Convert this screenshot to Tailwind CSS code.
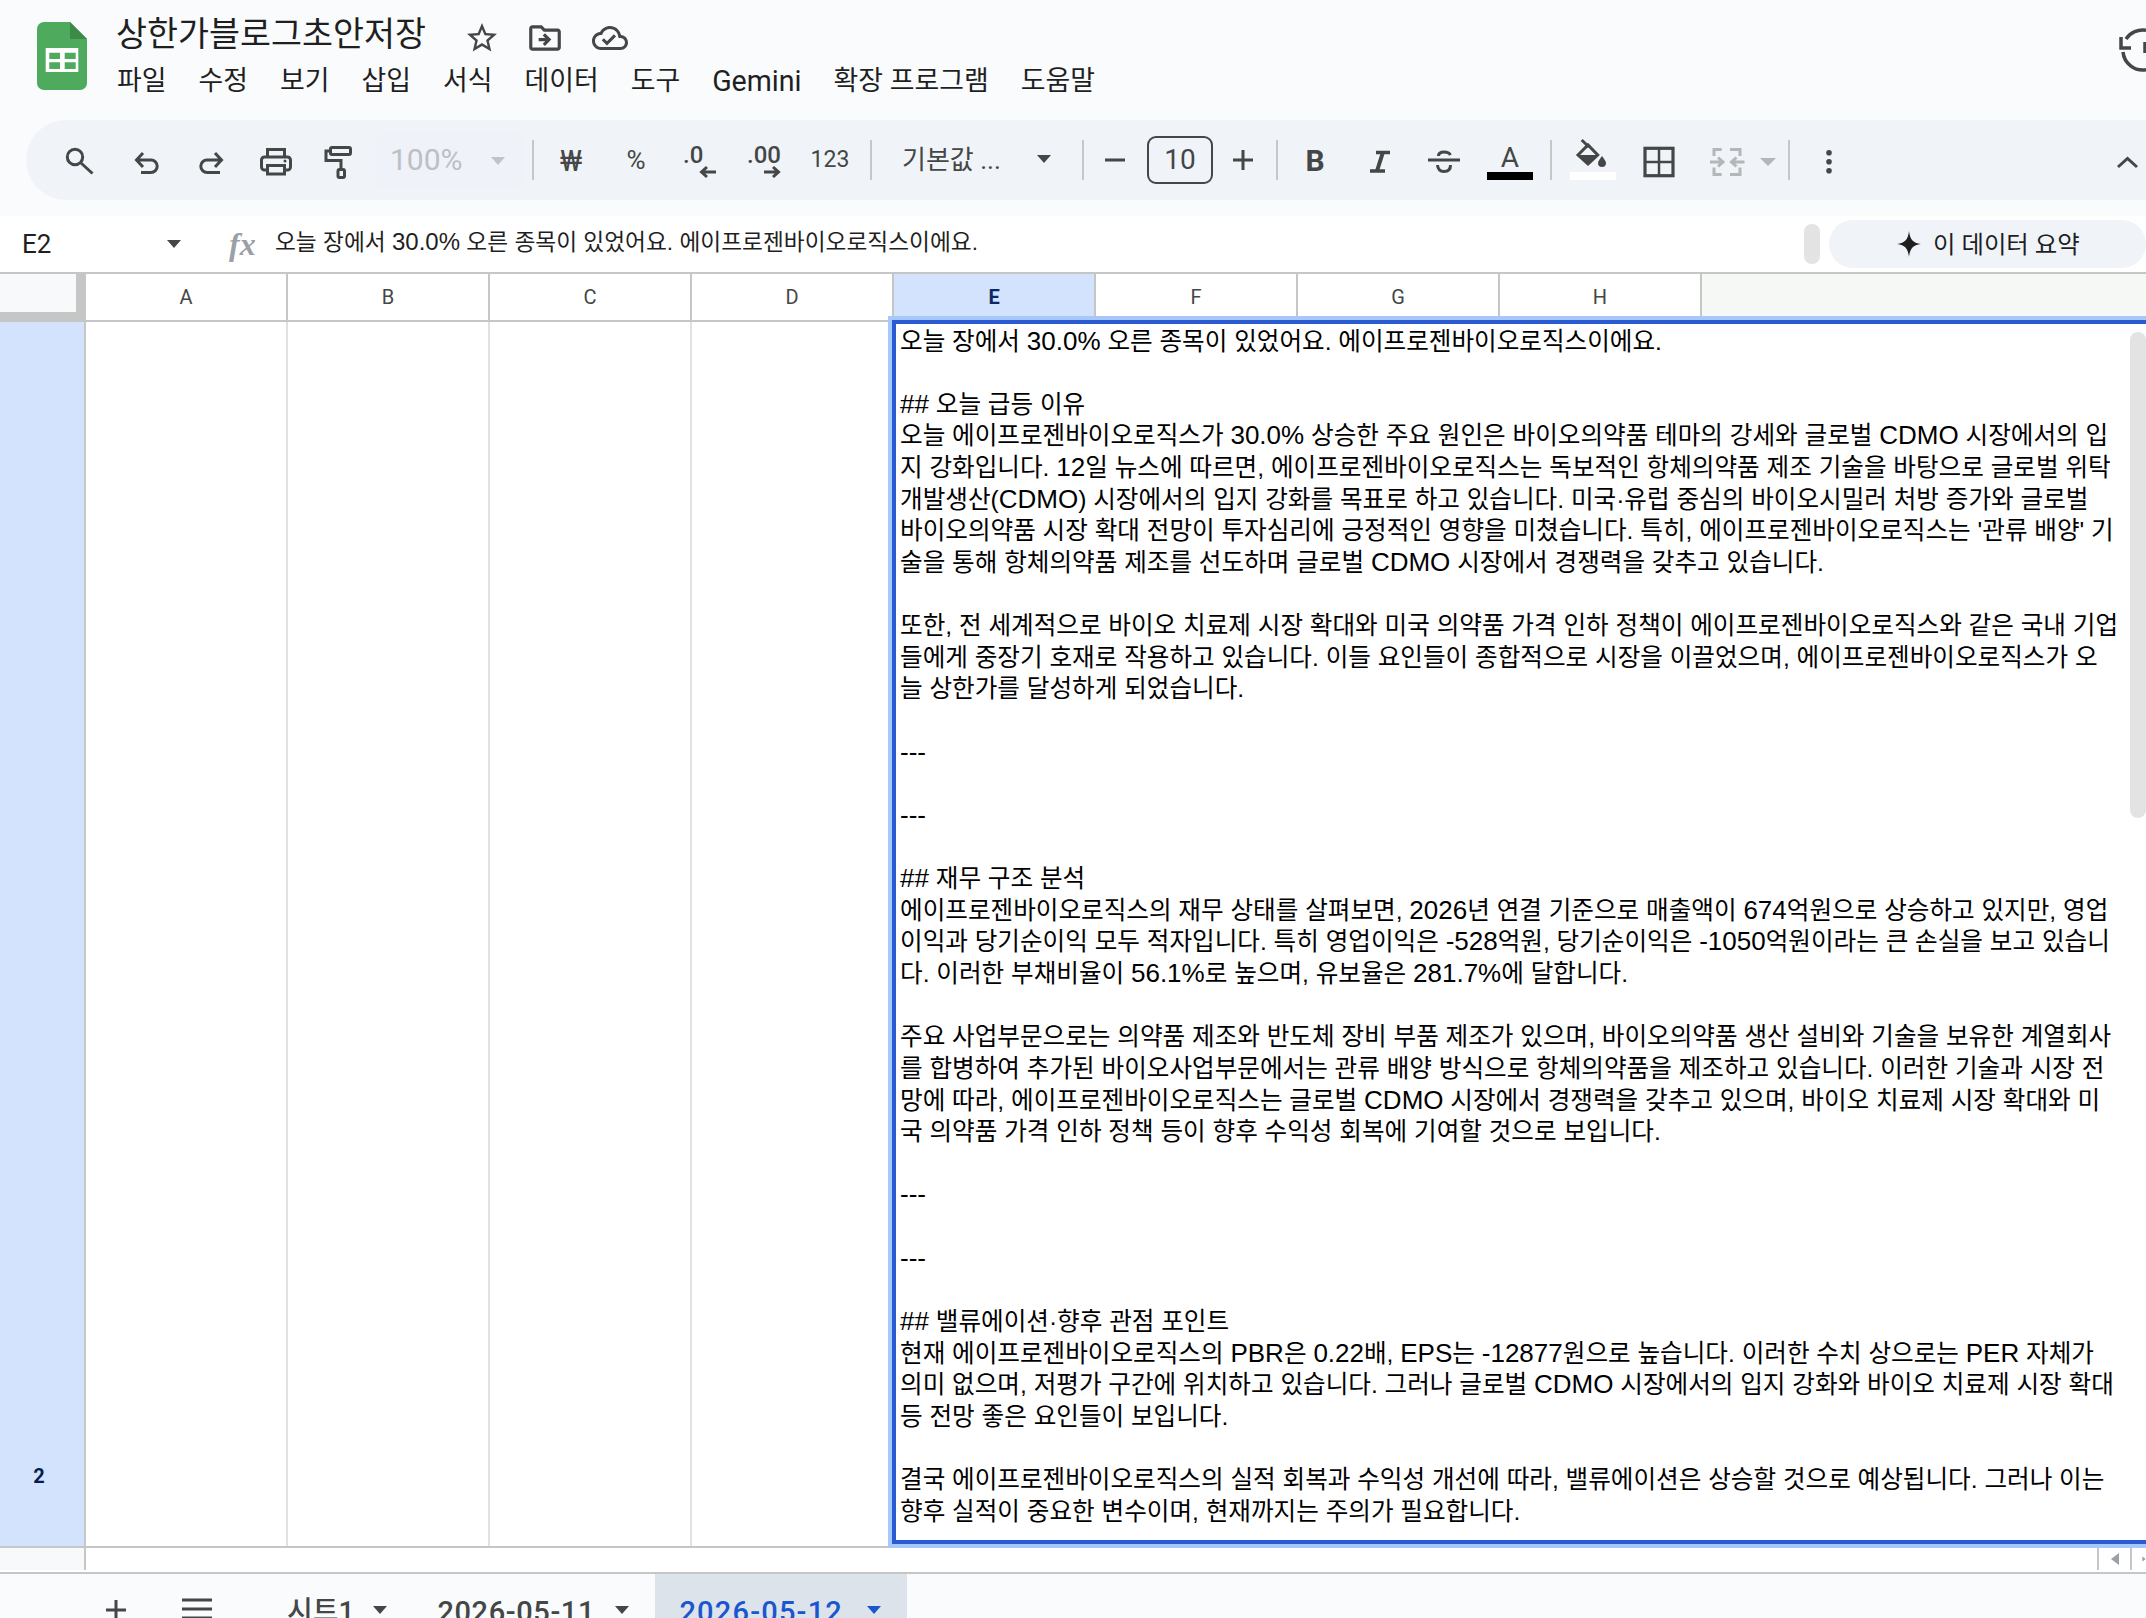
<!DOCTYPE html>
<html lang="ko">
<head>
  <meta charset="UTF-8" />
  <title>상한가블로그초안저장</title>
  <script src="https://cdn.jsdelivr.net/npm/@tailwindcss/browser@4"></script>
</head>
<body class="bg-white">
<div class="w-[2146px] h-[1618px] overflow-hidden flex flex-col [font-family:Roboto,'Noto_Sans_CJK_KR',sans-serif] text-[#1f1f1f]">

  <!-- Title + menu -->
  <header class="h-[216px] shrink-0 bg-[#f9fbfd] flex flex-col">
    <div class="h-[120px] flex">
      <svg class="ml-[37px] mt-[22px] shrink-0" width="50" height="68" viewBox="0 0 50 68">
        <path fill="#4eab5e" d="M7 0H33L50 17V61a7 7 0 0 1-7 7H7a7 7 0 0 1-7-7V7a7 7 0 0 1 7-7Z"/>
        <path fill="#3b8a45" d="M33 0L50 17H33Z"/>
        <rect x="8.7" y="26" width="32.6" height="24" fill="#fff"/>
        <path fill="#4eab5e" d="M12.3 30.7H23V37H12.3ZM27.7 30.7H38.7V37H27.7ZM12.3 40.3H23V47H12.3ZM27.7 40.3H38.7V47H27.7Z"/>
      </svg>
      <div class="ml-[29px] flex flex-col">
        <div class="h-[46px] mt-[12px] flex items-center">
          <span class="text-[33.7px] leading-[46px]">상한가블로그초안저장</span>
          <svg class="ml-[38px] mt-[6px]" width="36" height="36" viewBox="0 0 24 24" fill="#444746"><path d="M22 9.24l-7.19-.62L12 2 9.19 8.63 2 9.24l5.46 4.73L5.82 21 12 17.27 18.18 21l-1.63-7.03L22 9.24zM12 15.4l-3.76 2.27 1-4.28-3.32-2.88 4.38-.38L12 6.1l1.71 4.04 4.38.38-3.32 2.88 1 4.28L12 15.4z"/></svg>
          <svg class="ml-[26px] mt-[6px]" width="38" height="38" viewBox="0 0 24 24" fill="#444746"><path d="M20 6h-8l-2-2H4c-1.1 0-1.99.9-1.99 2L2 18c0 1.1.9 2 2 2h16c1.1 0 2-.9 2-2V8c0-1.1-.9-2-2-2zm0 12H4V6h5.17l2 2H20v10zM12.16 12H8v2h4.16l-1.59 1.59L11.98 17 16 13l-4.02-4-1.41 1.41z"/></svg>
          <svg class="ml-[28px] mt-[6px]" width="36" height="36" viewBox="0 0 24 24" fill="#444746"><path d="M19.35 10.04C18.67 6.59 15.64 4 12 4 9.11 4 6.6 5.64 5.35 8.04 2.34 8.36 0 10.91 0 14c0 3.31 2.69 6 6 6h13c2.76 0 5-2.24 5-5 0-2.64-2.05-4.78-4.65-4.96zM19 18H6c-2.21 0-4-1.79-4-4 0-2.05 1.53-3.76 3.56-3.97l1.07-.11.5-.95C8.08 7.14 9.94 6 12 6c2.62 0 4.88 1.86 5.39 4.43l.3 1.5 1.53.11c1.56.1 2.78 1.41 2.78 2.96 0 1.65-1.35 3-3 3zm-9-3.82l-2.09-2.09L6.5 13.5 10 17l6.01-6.01-1.41-1.41z"/></svg>
        </div>
        <nav class="flex gap-[32px] ml-[1px] mt-[5px] text-[26.9px] leading-[36px]">
          <span>파일</span><span>수정</span><span>보기</span><span>삽입</span><span>서식</span><span>데이터</span><span>도구</span><span class="text-[28.6px]">Gemini</span><span>확장 프로그램</span><span>도움말</span>
        </nav>
      </div>
      <svg class="ml-auto mt-[28px] shrink-0" width="30" height="44" viewBox="0 0 30 44" fill="none" stroke="#444746" stroke-width="3.5">
        <path d="M10 11A20 20 0 0 1 30 2.2"/>
        <path d="M7 24A20 20 0 0 0 30 41.8"/>
        <path d="M5 9V20H15"/>
        <path d="M29 14V25"/>
      </svg>
    </div>

    <!-- Toolbar -->
    <div class="h-[80px] ml-[26px] bg-[#f0f4f9] rounded-l-[40px] flex items-center text-[#444746]">
      <svg class="ml-[31px] shrink-0" width="44" height="44" viewBox="0 0 44 44" fill="none" stroke="#444746" stroke-width="3"><circle cx="18" cy="19" r="7.7"/><path d="M24 25L35.5 35.5"/></svg>
      <svg class="ml-[24px] shrink-0" width="44" height="44" viewBox="0 0 44 44" fill="none" stroke="#444746" stroke-width="3"><path d="M18 15L11.5 22L18 29M12 22H26A6.2 6.2 0 0 1 26 34.4H16"/></svg>
      <svg class="ml-[20px] shrink-0" width="44" height="44" viewBox="0 0 44 44" fill="none" stroke="#444746" stroke-width="3"><path d="M26 15L32.5 22L26 29M32 22H18A6.2 6.2 0 0 0 18 34.4H31"/></svg>
      <svg class="ml-[21px] shrink-0" width="44" height="44" viewBox="0 0 44 44" fill="none" stroke="#444746" stroke-width="3"><path d="M13.5 18V11.5H30.5V18"/><rect x="7.5" y="19" width="29" height="13" rx="3"/><rect x="13.5" y="27.5" width="17" height="8.5" fill="#f0f4f9"/><circle cx="31" cy="23" r="1.5" fill="#444746" stroke="none"/></svg>
      <svg class="ml-[17px] shrink-0" width="44" height="44" viewBox="0 0 44 44" fill="none" stroke="#444746" stroke-width="3"><rect x="15.5" y="9.5" width="20" height="7" rx="1.5"/><path d="M15 13H11V22.5H26V31"/><rect x="23" y="31.5" width="6.5" height="8" rx="1.5"/></svg>

      <div class="ml-[16px] w-[148px] h-[56px] shrink-0 rounded-lg bg-[#eff3f9] flex items-center">
        <span class="ml-[15px] w-[72px] text-[30px] leading-none text-[#bcbfc3]">100%</span>
        <svg class="ml-[24px]" width="24" height="44" viewBox="0 0 24 44" fill="#c0c3c7"><path d="M5 19H19L12 27Z"/></svg>
      </div>
      <div class="ml-[9px] w-[2px] h-[40px] shrink-0 bg-[#c7c7c7]"></div>

      <div class="ml-[15px] w-[44px] h-[44px] shrink-0 flex items-center justify-center text-[30px]">₩</div>
      <div class="ml-[21px] w-[44px] h-[44px] shrink-0 flex items-center justify-center text-[26px]">%</div>
      <svg class="ml-[18px] shrink-0" width="44" height="44" viewBox="0 0 44 44" fill="#444746"><text x="7" y="25" font-size="24" font-weight="500">.0</text><path d="M40 34H26M31 29L25.5 34L31 39" fill="none" stroke="#444746" stroke-width="3"/></svg>
      <svg class="ml-[21px] shrink-0" width="44" height="44" viewBox="0 0 44 44" fill="#444746"><text x="6" y="25" font-size="24" font-weight="500">.00</text><path d="M23 34H37M32 29L37.5 34L32 39" fill="none" stroke="#444746" stroke-width="3"/></svg>
      <div class="ml-[23px] w-[44px] h-[44px] shrink-0 flex items-center justify-center text-[23px]">123</div>
      <div class="ml-[18px] w-[2px] h-[40px] shrink-0 bg-[#c7c7c7]"></div>

      <div class="ml-[30px] w-[154px] shrink-0 flex items-center justify-between text-[26px]">
        <span>기본값 ...</span>
        <svg width="24" height="44" viewBox="0 0 24 44" fill="#444746"><path d="M5 17H19L12 25Z"/></svg>
      </div>
      <div class="ml-[26px] w-[2px] h-[40px] shrink-0 bg-[#c7c7c7]"></div>

      <svg class="ml-[9px] shrink-0" width="44" height="44" viewBox="0 0 44 44" fill="none" stroke="#444746" stroke-width="3"><path d="M12 22H32"/></svg>
      <div class="ml-[10px] w-[66px] h-[48px] shrink-0 border-2 border-[#444746] rounded-[9px] flex items-center justify-center text-[28px]">10</div>
      <svg class="ml-[8px] shrink-0" width="44" height="44" viewBox="0 0 44 44" fill="none" stroke="#444746" stroke-width="3"><path d="M12 22H32M22 12V32"/></svg>
      <div class="ml-[11px] w-[2px] h-[40px] shrink-0 bg-[#c7c7c7]"></div>

      <div class="ml-[15px] w-[44px] h-[44px] shrink-0 flex items-center justify-center text-[30px] font-bold">B</div>
      <svg class="ml-[21px] shrink-0" width="44" height="44" viewBox="0 0 44 44" fill="none" stroke="#444746"><path d="M18 14.5H32M12 33H27" stroke-width="3.5"/><path d="M25 14L19 33" stroke-width="4"/></svg>
      <svg class="ml-[20px] shrink-0" width="44" height="44" viewBox="0 0 44 44" fill="none" stroke="#444746" stroke-width="3"><path d="M6 22H38"/><path d="M16.5 18Q16.5 14 22 14Q27 14 28.5 17"/><path d="M15.5 27Q16 33.5 22 33.5Q28.5 33.5 28.5 27"/></svg>
      <svg class="ml-[21px] shrink-0" width="46" height="44" viewBox="0 0 46 44" fill="#444746"><text x="23" y="29" font-size="28" text-anchor="middle">A</text><rect y="34" width="46" height="8" fill="#000"/></svg>
      <div class="ml-[17px] w-[2px] h-[40px] shrink-0 bg-[#c7c7c7]"></div>

      <svg class="ml-[18px] shrink-0" width="46" height="44" viewBox="0 0 46 44"><path d="M11.7 2L19 9M8 17L18 7L27.7 17L18 26Z" fill="none" stroke="#444746" stroke-width="3"/><path d="M8 17H27.7L18 26Z" fill="#444746"/><path d="M32 18C34 21 36 23 36 25A4 4 0 0 1 28 25C28 23 30 21 32 18Z" fill="#444746"/><rect y="34" width="46" height="8" fill="#fff"/></svg>
      <svg class="ml-[21px] shrink-0" width="44" height="44" viewBox="0 0 44 44" fill="none" stroke="#444746"><rect x="8" y="10.3" width="28" height="27.4" stroke-width="3.2"/><path d="M22 10V38M8 24H36" stroke-width="2.5"/></svg>
      <svg class="ml-[24px] shrink-0" width="44" height="44" viewBox="0 0 44 44" fill="none" stroke="#b4b6b8" stroke-width="3"><path d="M16.7 11.5H9V18M9 29.5V36.5H16.7M25 11.5H35V18M35 29.5V36.5H25"/><path d="M5 24H17M13 19.5L18 24L13 28.5M39.5 24H27.5M31.5 19.5L26.5 24L31.5 28.5"/></svg>
      <svg class="ml-[7px] shrink-0" width="24" height="44" viewBox="0 0 24 44" fill="#b4b6b8"><path d="M4 20H20L12 28Z"/></svg>
      <div class="ml-[8px] w-[2px] h-[40px] shrink-0 bg-[#c7c7c7]"></div>
      <svg class="ml-[17px] shrink-0" width="44" height="44" viewBox="0 0 44 44" fill="#444746"><circle cx="22" cy="14.7" r="2.8"/><circle cx="22" cy="23.7" r="2.8"/><circle cx="22" cy="32.7" r="2.8"/></svg>
      <svg class="ml-auto shrink-0" width="36" height="44" viewBox="0 0 36 44" fill="none" stroke="#444746" stroke-width="3"><path d="M8 29L17.5 20.5L27 29"/></svg>
    </div>
  </header>

  <!-- Formula bar -->
  <div class="h-[56px] shrink-0 flex items-center bg-white">
    <span class="ml-[22px] w-[29px] text-[26px] leading-none">E2</span>
    <svg class="ml-[111px]" width="24" height="24" viewBox="0 0 24 24" fill="#444746"><path d="M5 8H19L12 16Z"/></svg>
    <span class="ml-[43px] w-[34px] [font-family:'Liberation_Serif',serif] italic font-bold text-[32px] leading-none text-[#9aa0a6]">fx</span>
    <span class="ml-[12px] flex-1 -mt-[3px] whitespace-nowrap text-[22.7px] [font-family:'Liberation_Sans','Noto_Sans_CJK_KR',sans-serif]">오늘 장에서 <span class="text-[24px] leading-none">30.0%</span> 오른 종목이 있었어요. 에이프로젠바이오로직스이에요.</span>
    <div class="w-[16px] h-[40px] rounded-lg bg-[#e3e3e3]"></div>
    <div class="ml-[9px] w-[317px] h-[48px] rounded-[24px] bg-[#f0f4f9] flex items-center pl-[67px]">
      <svg width="26" height="26" viewBox="0 0 24 24" fill="#1f1f1f"><path d="M12 0C12.8 7.5 15.5 11 23 12C15.5 13 12.8 16.5 12 24C11.2 16.5 8.5 13 1 12C8.5 11 11.2 7.5 12 0Z"/></svg>
      <span class="ml-[11px] mt-[2px] text-[24.4px] leading-none">이 데이터 요약</span>
    </div>
  </div>

  <!-- Column headers -->
  <div class="h-[50px] shrink-0 border-t-2 border-b-2 border-[#c4c7c5] flex text-[20px] text-[#444746]">
    <div class="w-[86px] bg-[#c4c7c5]"><div class="w-[76px] h-[38px] bg-[#f8f9fa]"></div></div>
    <div class="w-[202px] border-r-2 border-[#c4c7c5] flex items-center justify-center">A</div>
    <div class="w-[202px] border-r-2 border-[#c4c7c5] flex items-center justify-center">B</div>
    <div class="w-[202px] border-r-2 border-[#c4c7c5] flex items-center justify-center">C</div>
    <div class="w-[202px] border-r-2 border-[#c4c7c5] flex items-center justify-center">D</div>
    <div class="w-[202px] border-r-2 border-[#c4c7c5] bg-[#d3e3fd] flex items-center justify-center font-bold text-[#0a2a66]">E</div>
    <div class="w-[202px] border-r-2 border-[#c4c7c5] flex items-center justify-center">F</div>
    <div class="w-[202px] border-r-2 border-[#c4c7c5] flex items-center justify-center">G</div>
    <div class="w-[202px] border-r-2 border-[#c4c7c5] flex items-center justify-center">H</div>
    <div class="flex-1 bg-[#f6f8f6]"></div>
  </div>

  <!-- Row 2 -->
  <div class="h-[1226px] shrink-0 border-b-2 border-[#c4c7c5] flex">
    <div class="w-[86px] shrink-0 border-r-2 border-[#c4c7c5] bg-[#d3e3fd] flex items-end justify-center pr-[6px] pb-[58px] text-[20px] leading-[24px] font-bold text-[#041e49]">2</div>
    <div class="w-[202px] shrink-0 border-r-2 border-[#e1e1e1]"></div>
    <div class="w-[202px] shrink-0 border-r-2 border-[#e1e1e1]"></div>
    <div class="w-[202px] shrink-0 border-r-2 border-[#e1e1e1]"></div>
    <div class="w-[202px] shrink-0 border-r-2 border-[#e1e1e1]"></div>
    <div class="relative z-10 -ml-[2px] -mt-[2px] w-[1300px] h-[1224px] shrink-0 border-4 border-[#2b5bd0] ring-4 ring-[#a8c7fa] bg-white pl-[4px] pt-[1.5px] whitespace-pre text-[24.6px] leading-[31.63px] text-black [font-family:'Liberation_Sans','Noto_Sans_CJK_KR',sans-serif] [&>i]:not-italic [&>i]:text-[26px] [&>i]:leading-none">오늘 장에서 <i>30.0%</i> 오른 종목이 있었어요. 에이프로젠바이오로직스이에요.

<i>##</i> 오늘 급등 이유
오늘 에이프로젠바이오로직스가 <i>30.0%</i> 상승한 주요 원인은 바이오의약품 테마의 강세와 글로벌 <i>CDMO</i> 시장에서의 입
지 강화입니다. <i>12</i>일 뉴스에 따르면, 에이프로젠바이오로직스는 독보적인 항체의약품 제조 기술을 바탕으로 글로벌 위탁
개발생산(<i>CDMO</i>) 시장에서의 입지 강화를 목표로 하고 있습니다. 미국·유럽 중심의 바이오시밀러 처방 증가와 글로벌
바이오의약품 시장 확대 전망이 투자심리에 긍정적인 영향을 미쳤습니다. 특히, 에이프로젠바이오로직스는 '관류 배양' 기
술을 통해 항체의약품 제조를 선도하며 글로벌 <i>CDMO</i> 시장에서 경쟁력을 갖추고 있습니다.

또한, 전 세계적으로 바이오 치료제 시장 확대와 미국 의약품 가격 인하 정책이 에이프로젠바이오로직스와 같은 국내 기업
들에게 중장기 호재로 작용하고 있습니다. 이들 요인들이 종합적으로 시장을 이끌었으며, 에이프로젠바이오로직스가 오
늘 상한가를 달성하게 되었습니다.

<i>---</i>

<i>---</i>

<i>##</i> 재무 구조 분석
에이프로젠바이오로직스의 재무 상태를 살펴보면, <i>2026</i>년 연결 기준으로 매출액이 <i>674</i>억원으로 상승하고 있지만, 영업
이익과 당기순이익 모두 적자입니다. 특히 영업이익은 <i>-528</i>억원, 당기순이익은 <i>-1050</i>억원이라는 큰 손실을 보고 있습니
다. 이러한 부채비율이 <i>56.1%</i>로 높으며, 유보율은 <i>281.7%</i>에 달합니다.

주요 사업부문으로는 의약품 제조와 반도체 장비 부품 제조가 있으며, 바이오의약품 생산 설비와 기술을 보유한 계열회사
를 합병하여 추가된 바이오사업부문에서는 관류 배양 방식으로 항체의약품을 제조하고 있습니다. 이러한 기술과 시장 전
망에 따라, 에이프로젠바이오로직스는 글로벌 <i>CDMO</i> 시장에서 경쟁력을 갖추고 있으며, 바이오 치료제 시장 확대와 미
국 의약품 가격 인하 정책 등이 향후 수익성 회복에 기여할 것으로 보입니다.

<i>---</i>

<i>---</i>

<i>##</i> 밸류에이션·향후 관점 포인트
현재 에이프로젠바이오로직스의 <i>PBR</i>은 <i>0.22</i>배, <i>EPS</i>는 <i>-12877</i>원으로 높습니다. 이러한 수치 상으로는 <i>PER</i> 자체가
의미 없으며, 저평가 구간에 위치하고 있습니다. 그러나 글로벌 <i>CDMO</i> 시장에서의 입지 강화와 바이오 치료제 시장 확대
등 전망 좋은 요인들이 보입니다.

결국 에이프로젠바이오로직스의 실적 회복과 수익성 개선에 따라, 밸류에이션은 상승할 것으로 예상됩니다. 그러나 이는
향후 실적이 중요한 변수이며, 현재까지는 주의가 필요합니다.<div class="absolute top-[8px] left-[1234px] w-[16px] h-[486px] rounded-lg bg-[#e3e3e3]"></div></div>
  </div>

  <!-- Horizontal scrollbar -->
  <div class="h-[24px] shrink-0 flex items-start">
    <div class="w-[86px] h-[22px] shrink-0 bg-[#f8f9fa] border-r-2 border-[#c4c7c5]"></div>
    <div class="flex-1"></div>
    <div class="w-[33px] h-[22px] shrink-0 border-l-2 border-[#c4c7c5] flex items-center justify-center">
      <svg width="10" height="14" viewBox="0 0 10 14" fill="#9aa0a6"><path d="M9 1V13L1 7Z"/></svg>
    </div>
    <div class="w-[16px] h-[22px] shrink-0 border-l-2 border-[#c4c7c5] flex items-center pl-[10px]">
      <svg width="10" height="14" viewBox="0 0 10 14" fill="#9aa0a6"><path d="M1 1V13L9 7Z"/></svg>
    </div>
  </div>

  <!-- Sheet tabs -->
  <div class="flex-1 border-t-2 border-[#c4c7c5] bg-[#f9fbfd] flex text-[28px] font-medium text-[#444746]">
    <svg class="ml-[94px] mt-[14px] shrink-0" width="44" height="44" viewBox="0 0 44 44" fill="none" stroke="#444746" stroke-width="3"><path d="M12 22H32M22 12V32"/></svg>
    <svg class="ml-[37px] mt-[14px] shrink-0" width="44" height="44" viewBox="0 0 44 44" fill="none" stroke="#444746" stroke-width="3"><path d="M7 12H37M7 21H37M7 30H37"/></svg>
    <span class="ml-[68px] mt-[20px] leading-[36px] whitespace-nowrap">시트1</span>
    <svg class="ml-[14px] mt-[24px] shrink-0" width="24" height="24" viewBox="0 0 24 24" fill="#444746"><path d="M5 8H19L12 16Z"/></svg>
    <span class="ml-[45px] w-[156px] mt-[20px] text-[29px] tracking-[0.6px] leading-[36px] whitespace-nowrap">2026-05-11</span>
    <svg class="ml-[17px] mt-[24px] shrink-0" width="24" height="24" viewBox="0 0 24 24" fill="#444746"><path d="M5 8H19L12 16Z"/></svg>
    <div class="ml-[21px] w-[252px] shrink-0 bg-[#dde3ea] flex text-[#1a56d0]">
      <span class="ml-[24px] w-[164px] mt-[20px] text-[29px] tracking-[1.2px] leading-[36px] whitespace-nowrap">2026-05-12</span>
      <svg class="ml-[19px] mt-[24px] shrink-0" width="24" height="24" viewBox="0 0 24 24" fill="#1a56d0"><path d="M5 8H19L12 16Z"/></svg>
    </div>
  </div>
</div>
</body>
</html>
